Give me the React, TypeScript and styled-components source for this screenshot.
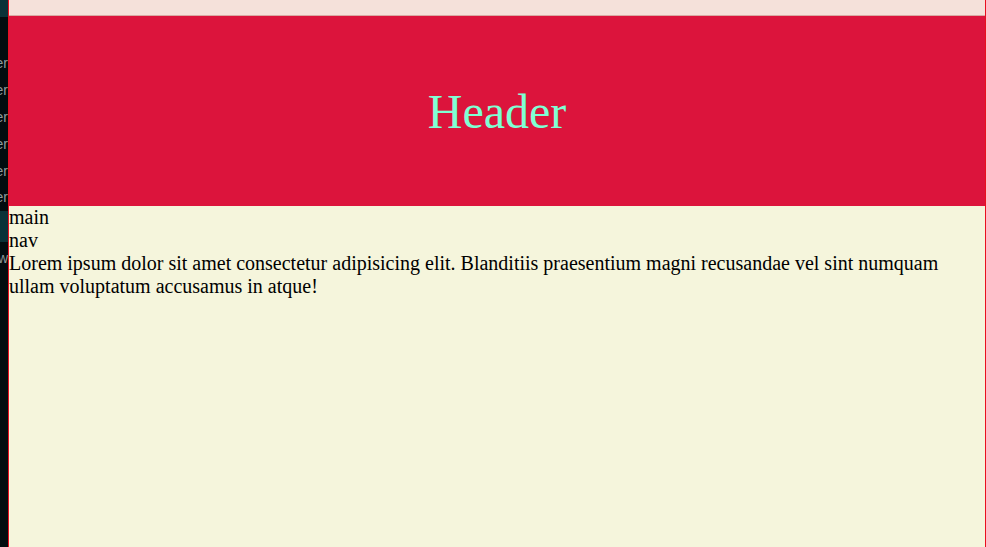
import React from "react";
import styled, { createGlobalStyle } from "styled-components";

const GlobalStyle = createGlobalStyle`
  html, body { margin: 0; padding: 0; }
  body { background: #020b0e; font-family: "Liberation Serif", "Times New Roman", serif; }
`;

const Shell = styled.div`
  display: flex;
  height: 547px;
  overflow: hidden;
`;

const Sidebar = styled.aside`
  width: 8px;
  flex: none;
  background: #020c0f;
  display: flex;
  flex-direction: column;
  overflow: hidden;
  font-family: "Liberation Sans", Arial, sans-serif;
  font-size: 14px;
  color: #8d9a9c;
`;

const SideBlock = styled.div<{ $h: number }>`
  height: ${(p) => p.$h}px;
  flex: none;
  background: #0a3238;
`;

const SideGap = styled.div<{ $h: number }>`
  height: ${(p) => p.$h}px;
  flex: none;
`;

const SideItem = styled.div<{ $h: number }>`
  height: ${(p) => p.$h}px;
  flex: none;
  display: flex;
  justify-content: flex-end;
  align-items: center;
  white-space: nowrap;
`;

const Page = styled.div`
  flex: 1;
  display: flex;
  flex-direction: column;
  border-left: 1px solid #e8101f;
  border-right: 1px solid #e8101f;
  background: #f5f5dc;
  max-width: 976px;
`;

const TopBar = styled.div`
  height: 15px;
  background: #f5e1da;
  border-bottom: 1px solid #d9aaa3;
  flex: none;
`;

const Header = styled.header`
  height: 190px;
  flex: none;
  background: #dc143c;
  display: flex;
  align-items: center;
  justify-content: center;
  color: #7fffd4;
  font-size: 48px;
`;

const Main = styled.main`
  flex: 1;
  background: #f5f5dc;
  color: #000;
  font-size: 20px;
  line-height: 23px;
`;

const Line = styled.div``;

export default function App() {
  const rows = ["er", "er", "er", "er", "er", "er"];
  return (
    <>
      <GlobalStyle />
      <Shell>
        <Sidebar>
          <SideBlock $h={17} />
          <SideGap $h={33} />
          {rows.map((r, i) => (
            <SideItem key={i} $h={26.8}>
              {r}
            </SideItem>
          ))}
          <SideBlock $h={31} />
          <SideItem $h={32}>w</SideItem>
        </Sidebar>
        <Page>
          <TopBar />
          <Header>Header</Header>
          <Main>
            <Line>main</Line>
            <Line>nav</Line>
            <Line>
              Lorem ipsum dolor sit amet consectetur adipisicing elit. Blanditiis praesentium magni recusandae vel sint
              numquam ullam voluptatum accusamus in atque!
            </Line>
          </Main>
        </Page>
      </Shell>
    </>
  );
}
